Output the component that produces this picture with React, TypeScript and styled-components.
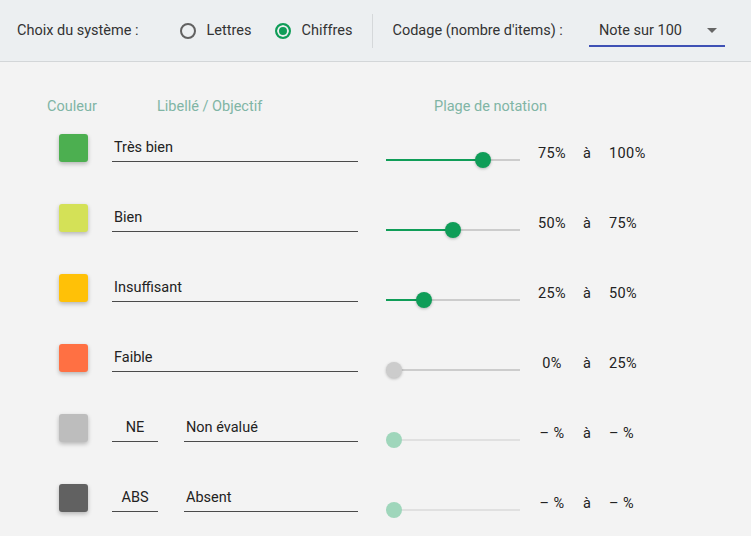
import React, { useState } from "react";
import styled, { createGlobalStyle } from "styled-components";

type Level = {
  color: string;
  code?: string;
  label: string;
  from: number | null;
  to: number | null;
  value: number;
  mode: "active" | "zero" | "disabled";
};

const levels: Level[] = [
  { color: "#4caf50", label: "Très bien", from: 75, to: 100, value: 0.75, mode: "active" },
  { color: "#d4e157", label: "Bien", from: 50, to: 75, value: 0.5, mode: "active" },
  { color: "#ffc107", label: "Insuffisant", from: 25, to: 50, value: 0.25, mode: "active" },
  { color: "#ff7043", label: "Faible", from: 0, to: 25, value: 0, mode: "zero" },
  { color: "#bdbdbd", code: "NE", label: "Non évalué", from: null, to: null, value: 0, mode: "disabled" },
  { color: "#616161", code: "ABS", label: "Absent", from: null, to: null, value: 0, mode: "disabled" },
];

const GlobalStyle = createGlobalStyle`
  html, body {
    margin: 0;
    padding: 0;
    background: #f3f3f3;
    font-family: Roboto, "Liberation Sans", Arial, sans-serif;
    color: #333;
  }
`;

const App = () => {
  const [system, setSystem] = useState("chiffres");

  return (
    <Page>
      <GlobalStyle />
      <Toolbar>
        <ToolLabel>Choix du système :</ToolLabel>
        <RadioGroup>
          <RadioItem onClick={() => setSystem("lettres")}>
            <RadioCircle $checked={system === "lettres"} />
            Lettres
          </RadioItem>
          <RadioItem onClick={() => setSystem("chiffres")}>
            <RadioCircle $checked={system === "chiffres"} />
            Chiffres
          </RadioItem>
        </RadioGroup>
        <Divider />
        <ToolLabel>Codage (nombre d'items) :</ToolLabel>
        <Select>
          Note sur 100
          <Caret />
        </Select>
      </Toolbar>

      <Content>
        <ColumnHeaders>
          <ColHead $width={110}>Couleur</ColHead>
          <ColHead $width={277}>Libellé / Objectif</ColHead>
          <ColHead>Plage de notation</ColHead>
        </ColumnHeaders>

        {levels.map((level) => (
          <Row key={level.label}>
            <Swatch $color={level.color} />
            <Fields>
              {level.code && <Field $width={46} $center>{level.code}</Field>}
              <Field $width={level.code ? 174 : 246}>{level.label}</Field>
            </Fields>
            <Slider $mode={level.mode}>
              <Track />
              {level.mode === "active" && (
                <Fill style={{ width: 8 + level.value * 118 }} />
              )}
              <Thumb $mode={level.mode} style={{ left: level.value * 118 }} />
            </Slider>
            <Range>
              <From>{level.from === null ? "– %" : `${level.from}%`}</From>
              <To>à</To>
              <Until>{level.to === null ? "– %" : `${level.to}%`}</Until>
            </Range>
          </Row>
        ))}
      </Content>
    </Page>
  );
};

const Page = styled.div`
  width: 751px;
  min-height: 536px;
  background: #f3f3f3;
  font-size: 14.5px;
`;

const Toolbar = styled.div`
  display: flex;
  align-items: center;
  height: 61px;
  padding-left: 17px;
  background: #eceff1;
  border-bottom: 1px solid #d3d6d8;
`;

const ToolLabel = styled.span`
  color: #333;
`;

const RadioGroup = styled.div`
  display: flex;
  gap: 23px;
  margin-left: 41px;
`;

const RadioItem = styled.label`
  display: flex;
  align-items: center;
  gap: 11px;
  cursor: pointer;
`;

const RadioCircle = styled.span<{ $checked: boolean }>`
  width: 12px;
  height: 12px;
  border-radius: 50%;
  border: 2px solid ${(p) => (p.$checked ? "#0f9d58" : "#616161")};
  background: ${(p) => (p.$checked ? "#0f9d58" : "transparent")};
  box-shadow: inset 0 0 0 2px #eceff1;
`;

const Divider = styled.div`
  width: 1px;
  height: 34px;
  margin: 0 19px 0 20px;
  background: #d5d8da;
`;

const Select = styled.div`
  display: flex;
  align-items: center;
  justify-content: space-between;
  width: 136px;
  height: 30px;
  margin-left: 26px;
  margin-top: 2px;
  padding: 0 8px 0 10px;
  box-sizing: border-box;
  border-bottom: 2px solid #3f51b5;
`;

const Caret = styled.span`
  width: 0;
  height: 0;
  border-left: 5px solid transparent;
  border-right: 5px solid transparent;
  border-top: 5px solid #666;
`;

const Content = styled.div`
  padding: 36px 0 0 47px;
`;

const ColumnHeaders = styled.div`
  display: flex;
  height: 18px;
  margin-bottom: 18px;
`;

const ColHead = styled.div<{ $width?: number }>`
  width: ${(p) => (p.$width ? `${p.$width}px` : "auto")};
  color: #80b5a5;
`;

const Row = styled.div`
  display: flex;
  align-items: flex-start;
  height: 28px;
  margin-bottom: 42px;
`;

const Swatch = styled.div<{ $color: string }>`
  width: 29px;
  height: 28px;
  margin-left: 12px;
  border-radius: 3px;
  background: ${(p) => p.$color};
  box-shadow: 0 2px 4px rgba(0, 0, 0, 0.25);
`;

const Fields = styled.div`
  display: flex;
  gap: 26px;
  margin-left: 24px;
  width: 246px;
`;

const Field = styled.div<{ $width: number; $center?: boolean }>`
  width: ${(p) => p.$width}px;
  height: 28px;
  padding: 5px 2px 0;
  box-sizing: border-box;
  text-align: ${(p) => (p.$center ? "center" : "left")};
  border-bottom: 1px solid #4a4a4a;
  color: #222;
  line-height: 18px;
`;

const Slider = styled.div<{ $mode: string }>`
  position: relative;
  width: 134px;
  height: 28px;
  margin-left: 28px;
  --track: ${(p) => (p.$mode === "disabled" ? "#e0e0e0" : "#cccccc")};
`;

const Track = styled.div`
  position: absolute;
  left: 0;
  right: 0;
  top: 25px;
  height: 2px;
  background: var(--track);
`;

const Fill = styled.div`
  position: absolute;
  left: 0;
  top: 25px;
  height: 2px;
  background: #0f9d58;
`;

const Thumb = styled.div<{ $mode: string }>`
  position: absolute;
  top: 18px;
  width: 16px;
  height: 16px;
  border-radius: 50%;
  background: ${(p) =>
    p.$mode === "active" ? "#0f9d58" : p.$mode === "zero" ? "#cccccc" : "#9fd6bb"};
  box-shadow: ${(p) => (p.$mode === "disabled" ? "none" : "0 1px 3px rgba(0,0,0,0.25)")};
`;

const Range = styled.div`
  display: flex;
  align-items: center;
  height: 20px;
  margin-top: 9px;
  margin-left: 12px;
  color: #222;
  letter-spacing: 0.4px;
`;

const From = styled.span`
  width: 40px;
  text-align: center;
`;

const To = styled.span`
  width: 8px;
  margin-left: 11px;
`;

const Until = styled.span`
  margin-left: 18px;
`;

export default App;
